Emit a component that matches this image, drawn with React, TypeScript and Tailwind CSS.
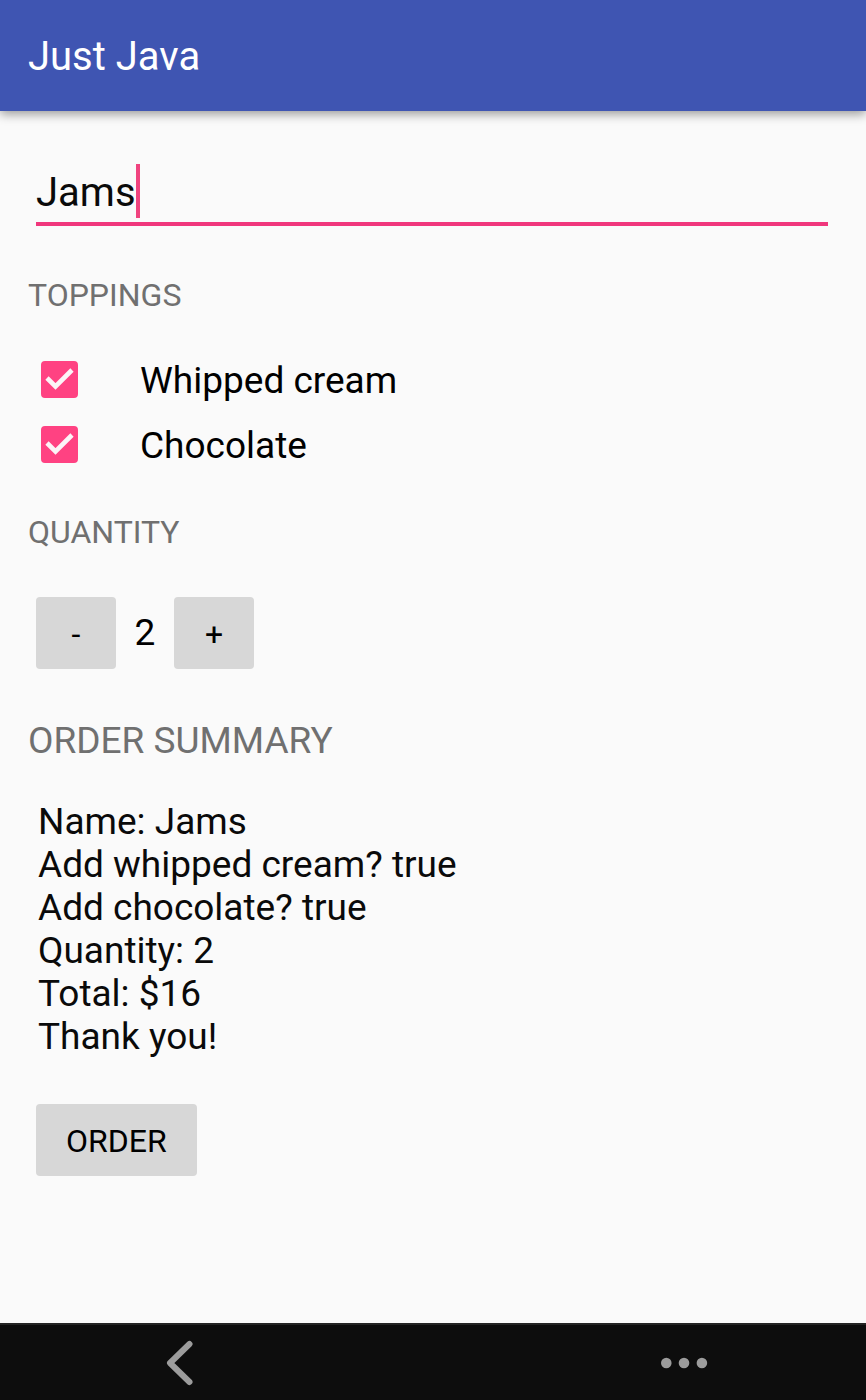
import { useState } from "react";

function Topping({ label, checked, onChange }: { label: string; checked: boolean; onChange: (v: boolean) => void }) {
  return (
    <label className="flex h-[65px] items-center pl-[41px] text-[37px] leading-[43px] text-black">
      <span className="grid size-[37px] shrink-0">
        <input
          type="checkbox"
          checked={checked}
          onChange={(e) => onChange(e.target.checked)}
          className="peer col-start-1 row-start-1 size-[37px] appearance-none rounded-[4px] border-4 border-[#757575] checked:border-[#ff4282] checked:bg-[#ff4282]"
        />
        <svg viewBox="0 0 37 37" className="pointer-events-none invisible col-start-1 row-start-1 size-[37px] peer-checked:visible" fill="none" stroke="#fcf4f7" strokeWidth="4.6">
          <path d="M6 17 14.5 25.5 31 9" />
        </svg>
      </span>
      <span className="ml-[62px] pt-0.5">{label}</span>
    </label>
  );
}

export default function App() {
  const [name, setName] = useState("Jams");
  const [cream, setCream] = useState(true);
  const [chocolate, setChocolate] = useState(true);
  const [quantity, setQuantity] = useState(2);
  const total = quantity * (5 + (cream ? 1 : 0) + (chocolate ? 2 : 0));
  const heading = "px-7 text-[#707070]";
  const button = "h-[72px] rounded-[4px] bg-[#d7d7d7] pt-0.5 text-[32px] leading-10 text-black";

  return (
    <div className="flex min-h-screen flex-col bg-[#fafafa] font-['Roboto',sans-serif] text-[#0a0a0a]">
      <header className="z-10 flex h-[111px] items-center bg-[#3f55b2] px-7 pt-0.5 shadow-[0_3px_10px_rgba(0,0,0,0.4)]">
        <h1 className="text-[40px] leading-[48px] text-white">Just Java</h1>
      </header>
      <main className="flex grow flex-col">
        <div className="mr-[38px] ml-9 mt-[53px] flex h-[62px] items-start border-b-4 border-[#f0377c]">
          <input aria-label="Name" value={name} onChange={(e) => setName(e.target.value)} className="field-sizing-content h-[58px] min-w-1 bg-transparent text-[40px] outline-none" />
          <span aria-hidden="true" className="h-[54px] w-1 bg-[#f0437f]" />
        </div>
        <h2 className={`${heading} mt-[49px] text-[32px] leading-10`}>TOPPINGS</h2>
        <div className="mt-8">
          <Topping label="Whipped cream" checked={cream} onChange={setCream} />
          <Topping label="Chocolate" checked={chocolate} onChange={setChocolate} />
        </div>
        <h2 className={`${heading} mt-[35px] text-[32px] leading-10`}>QUANTITY</h2>
        <div className="mt-[45px] flex items-center px-9">
          <button type="button" aria-label="Decrease" onClick={() => setQuantity(Math.max(0, quantity - 1))} className={`${button} w-20`}>-</button>
          <output className="w-[58px] text-center text-[37px] text-black">{quantity}</output>
          <button type="button" aria-label="Increase" onClick={() => setQuantity(quantity + 1)} className={`${button} w-20`}>+</button>
        </div>
        <h2 className={`${heading} mt-[50px] text-[37px] leading-[43px]`}>ORDER SUMMARY</h2>
        <div className="mt-[38px] px-[38px] text-[37px] leading-[43px]">
          <p>Name: {name}</p>
          <p>Add whipped cream? {String(cream)}</p>
          <p>Add chocolate? {String(chocolate)}</p>
          <p>Quantity: {quantity}</p>
          <p>Total: ${total}</p>
          <p>Thank you!</p>
        </div>
        <div className="mt-[46px] px-9 pb-10">
          <button type="button" className={`${button} px-[30px]`}>ORDER</button>
        </div>
      </main>
      <nav aria-label="System" className="flex h-[77px] items-center justify-between border-t-2 border-[#242424] bg-[#0d0d0d] pr-[158px] pl-[166px] text-[#9c9c9c]">
        <button type="button" aria-label="Back">
          <svg viewBox="0 0 28 46" className="h-[46px] w-7" fill="none" stroke="currentColor" strokeWidth="6" strokeLinecap="round" strokeLinejoin="round">
            <path d="M23.5 4 4 23 23.5 42" />
          </svg>
        </button>
        <button type="button" aria-label="More">
          <svg viewBox="0 0 48 12" className="h-3 w-12" fill="currentColor">
            <circle cx="6.3" cy="6" r="5.3" />
            <circle cx="24" cy="6" r="5.3" />
            <circle cx="41.9" cy="6" r="5.3" />
          </svg>
        </button>
      </nav>
    </div>
  );
}
